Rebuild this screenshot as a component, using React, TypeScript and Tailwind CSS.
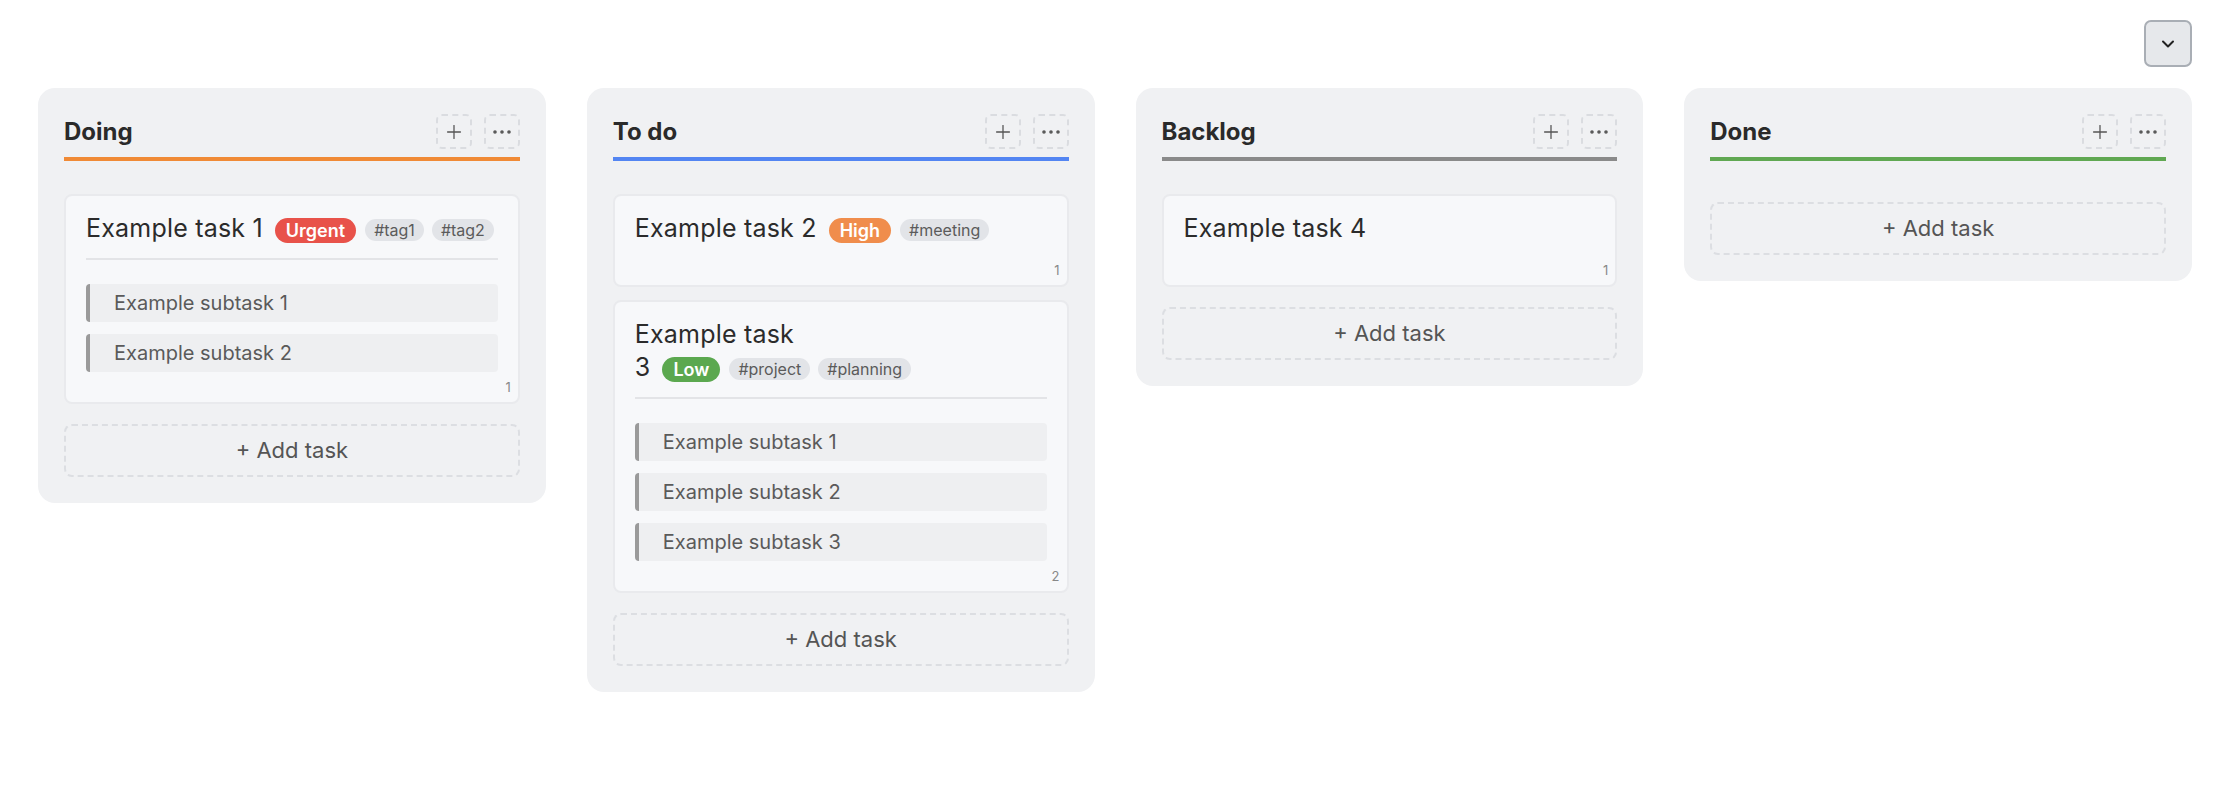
import React from "react";
import { ChevronDown, Ellipsis, Plus } from "lucide-react";

type Task = {
  title: string;
  priority?: { label: string; className: string };
  tags: string[];
  subtasks: string[];
  count: number;
};

type Column = {
  title: string;
  lineClass: string;
  tasks: Task[];
};

const columns: Column[] = [
  {
    title: "Doing",
    lineClass: "border-[#f08a36]",
    tasks: [
      {
        title: "Example task 1",
        priority: { label: "Urgent", className: "bg-[#e8524a]" },
        tags: ["#tag1", "#tag2"],
        subtasks: ["Example subtask 1", "Example subtask 2"],
        count: 1,
      },
    ],
  },
  {
    title: "To do",
    lineClass: "border-[#5385f2]",
    tasks: [
      {
        title: "Example task 2",
        priority: { label: "High", className: "bg-[#f08d4c]" },
        tags: ["#meeting"],
        subtasks: [],
        count: 1,
      },
      {
        title: "Example task 3",
        priority: { label: "Low", className: "bg-[#5ba84f]" },
        tags: ["#project", "#planning"],
        subtasks: ["Example subtask 1", "Example subtask 2", "Example subtask 3"],
        count: 2,
      },
    ],
  },
  {
    title: "Backlog",
    lineClass: "border-[#8a8a8a]",
    tasks: [{ title: "Example task 4", tags: [], subtasks: [], count: 1 }],
  },
  {
    title: "Done",
    lineClass: "border-[#60a852]",
    tasks: [],
  },
];

const TaskCard = ({ task }: { task: Task }) => {
  const words = task.title.split(" ");
  const last = words.pop();
  const hasBadges = task.priority || task.tags.length > 0;

  return (
    <div className="rounded-[8px] border-2 border-[#e9eaed] bg-[#f7f8fa] px-5 pt-[16px] pb-[6px]">
      <div
        className={`text-[25px] leading-[33px] tracking-[0.2px] text-[#2b2b2b] ${
          task.subtasks.length > 0 ? "border-b-2 border-[#e3e4e7] pb-[13px]" : "pb-[10px]"
        }`}
      >
        {words.join(" ")}{" "}
        <span className="whitespace-nowrap">
          {last}
          {hasBadges && (
            <span className="ml-3 inline-flex items-center gap-2 align-middle tracking-normal">
              {task.priority && (
                <span
                  className={`mr-px h-[25px] rounded-full px-[11px] text-[18px] leading-[25px] font-semibold text-white ${task.priority.className}`}
                >
                  {task.priority.label}
                </span>
              )}
              {task.tags.map((tag) => (
                <span
                  key={tag}
                  className="h-[22px] rounded-full bg-[#e2e4e8] px-[9px] text-[16px] leading-[22px] text-[#5b5b5b]"
                >
                  {tag}
                </span>
              ))}
            </span>
          )}
        </span>
      </div>
      {task.subtasks.length > 0 && (
        <div className="mt-[24px] flex flex-col gap-3">
          {task.subtasks.map((s) => (
            <div
              key={s}
              className="flex h-[38px] items-center rounded-[4px] border-l-4 border-[#9a9a9a] bg-[#eeeff1] pl-[24px] text-[20px] text-[#5a5a5a]"
            >
              {s}
            </div>
          ))}
        </div>
      )}
      <div className="mt-[6px] -mr-[13px] text-right text-[13px] leading-[18px] text-[#888]">
        {task.count}
      </div>
    </div>
  );
};

const BoardColumn = ({ column }: { column: Column }) => {
  return (
    <div className="rounded-[17px] bg-[#f0f1f3] p-[26px]">
      <div className={`flex items-center justify-between border-b-4 pb-[8px] ${column.lineClass}`}>
        <h2 className="text-[24px] leading-[33px] font-bold text-[#2a2a2a]">{column.title}</h2>
        <div className="flex gap-3">
          <button className="flex h-[35px] w-[36px] items-center justify-center rounded-[6px] border-2 border-dashed border-[#dadce0] text-[#555]">
            <Plus size={22} strokeWidth={1.4} />
          </button>
          <button className="flex h-[35px] w-[36px] items-center justify-center rounded-[6px] border-2 border-dashed border-[#dadce0] text-[#555]">
            <Ellipsis size={24} strokeWidth={1.6} />
          </button>
        </div>
      </div>
      {column.tasks.length > 0 ? (
        <>
          <div className="mt-[33px] flex flex-col gap-[13px]">
            {column.tasks.map((t) => (
              <TaskCard key={t.title} task={t} />
            ))}
          </div>
          <button className="mt-[20px] flex h-[53px] w-full items-center justify-center rounded-[8px] border-2 border-dashed border-[#dcdee2] text-[22px] text-[#555]">
            + Add task
          </button>
        </>
      ) : (
        <button className="mt-[41px] flex h-[53px] w-full items-center justify-center rounded-[8px] border-2 border-dashed border-[#dcdee2] text-[22px] text-[#555]">
          + Add task
        </button>
      )}
    </div>
  );
};

export default function App() {
  return (
    <div className="min-h-screen bg-white font-['Inter','Noto_Sans',sans-serif]">
      <div className="flex justify-end pt-[20px] pr-[36px]">
        <button className="flex h-[47px] w-[48px] items-center justify-center rounded-[7px] border-2 border-[#a9aeb5] bg-[#e6e8eb] text-[#222]">
          <ChevronDown size={20} strokeWidth={2.4} />
        </button>
      </div>
      <div className="mt-[21px] grid grid-cols-4 items-start gap-[41px] pr-[36px] pl-[38px]">
        {columns.map((c) => (
          <BoardColumn key={c.title} column={c} />
        ))}
      </div>
    </div>
  );
}
